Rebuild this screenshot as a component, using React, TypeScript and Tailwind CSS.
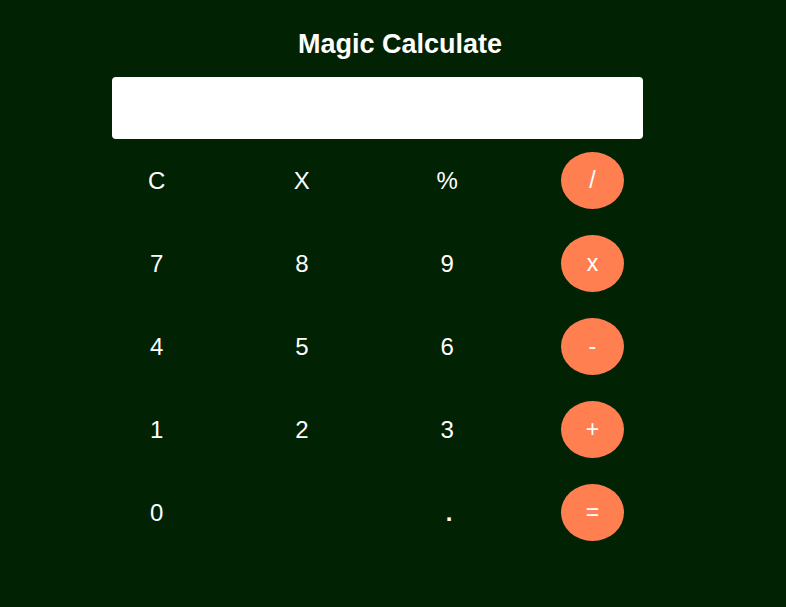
import React, { useState } from 'react';

const keys: { label: string; op?: boolean }[] = [
  { label: 'C' }, { label: 'X' }, { label: '%' }, { label: '/', op: true },
  { label: '7' }, { label: '8' }, { label: '9' }, { label: 'x', op: true },
  { label: '4' }, { label: '5' }, { label: '6' }, { label: '-', op: true },
  { label: '1' }, { label: '2' }, { label: '3' }, { label: '+', op: true },
  { label: '0' }, { label: '' }, { label: '.' }, { label: '=', op: true },
];

const App: React.FC = () => {
  const [value, setValue] = useState('');

  return (
    <div
      className="h-[607px] w-full bg-[#022204] text-white"
      style={{ fontFamily: '"Liberation Sans", Arial, sans-serif' }}
    >
      {/* Title */}
      <div className="flex justify-center pl-[14px] pt-[29px]">
        <h1 className="text-[27px] font-bold leading-[30px]">Magic Calculate</h1>
      </div>

      {/* Display */}
      <input
        value={value}
        onChange={(e) => setValue(e.target.value)}
        className="mt-[18px] ml-[112px] block h-[62px] w-[531px] rounded-[4px] bg-white px-3 text-[24px] text-black outline-none"
      />

      {/* Keypad */}
      <div className="mt-[13px] ml-[84px] grid w-[581px] grid-cols-4 gap-y-[26px]">
        {keys.map((k, i) => (
          <div key={i} className="flex h-[57px] items-center justify-center">
            {k.op ? (
              <button className="flex h-[57px] w-[63px] items-center justify-center rounded-[50%] bg-[#ff7f50] text-[23px] text-white">
                {k.label}
              </button>
            ) : (
              <button
                className={
                  k.label === '.'
                    ? 'pl-[4px] text-[24px] font-bold text-white'
                    : 'text-[24px] text-white'
                }
              >
                {k.label}
              </button>
            )}
          </div>
        ))}
      </div>
    </div>
  );
};

export default App;
